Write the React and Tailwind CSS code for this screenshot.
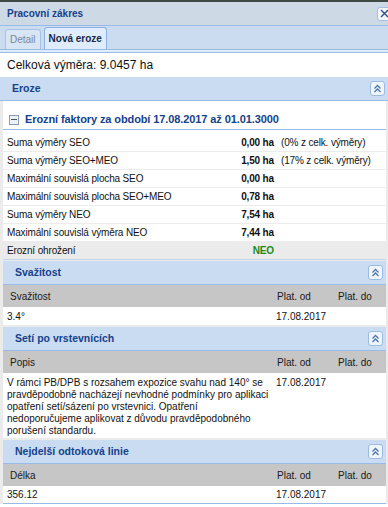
import React from 'react';

const FONT = "font-['Liberation_Sans',Arial,sans-serif]";

const CollapseBtn = () => (
  <span className="w-[15px] h-[15px] rounded-[3px] border border-[#9dbbe2] bg-[#eef5fd] flex items-center justify-center">
    <svg width="9" height="9" viewBox="0 0 9 9" fill="none" stroke="#4f74a8" strokeWidth="1.3">
      <path d="M1.5 4.5 L4.5 1.5 L7.5 4.5" />
      <path d="M1.5 8 L4.5 5 L7.5 8" />
    </svg>
  </span>
);

const PanelHeader = ({ title, button = true }) => (
  <div className="h-[24px] bg-[#cadcf1] border-b border-[#99bbe8] flex items-center justify-between pl-[12px] pr-[3px]">
    <span className="text-[10.5px] font-bold text-[#15428b]">{title}</span>
    {button && <CollapseBtn />}
  </div>
);

const rows = [
  { label: 'Suma výměry SEO', value: '0,00 ha', note: '(0% z celk. výměry)' },
  { label: 'Suma výměry SEO+MEO', value: '1,50 ha', note: '(17% z celk. výměry)' },
  { label: 'Maximální souvislá plocha SEO', value: '0,00 ha' },
  { label: 'Maximální souvislá plocha SEO+MEO', value: '0,78 ha' },
  { label: 'Suma výměry NEO', value: '7,54 ha' },
  { label: 'Maximální souvislá výměra NEO', value: '7,44 ha' },
];

const GridHeader = ({ first }) => (
  <div className="h-[22px] bg-[#c6c6c6] flex items-center text-[10px] text-[#1a1a1a]">
    <span className="w-[274px] pl-[7px]">{first}</span>
    <span className="w-[61px]">Plat. od</span>
    <span>Plat. do</span>
  </div>
);

export default function App() {
  return (
    <div className={`w-[388px] h-[507px] overflow-hidden bg-white ${FONT} text-[#111]`}>
      <div className="h-[2px] bg-[#3e4a43]" />
      <div className="h-[24px] bg-[#ced9e6] border-b border-[#99bbe8] flex items-center justify-between pl-[7px]">
        <span className="text-[10px] font-bold text-[#15428b]">Pracovní zákres</span>
        <span className="w-[14px] h-[14px] -mr-[3px] rounded-[3px] border border-[#a6bfdf] bg-[#f2f6fb] flex items-center justify-center">
          <svg width="9" height="9" viewBox="0 0 9 9" stroke="#2c4f8c" strokeWidth="1.4">
            <path d="M1 1 L8 8 M8 1 L1 8" />
          </svg>
        </span>
      </div>

      <div className="h-[23px] bg-[#cbdcf0] flex items-end pl-[5px] gap-[3px]">
        <div className="h-[20px] px-[4px] rounded-t-[3px] border border-b-0 border-[#a9c2e2] bg-[#d8e5f4] flex items-center text-[10px] text-[#7b8896]">
          Detail
        </div>
        <div className="h-[22px] px-[4px] rounded-t-[3px] border border-b-0 border-[#8db2e3] bg-[#deecfd] flex items-center text-[10px] font-bold text-[#15294a]">
          Nová eroze
        </div>
      </div>
      <div className="h-[3px] bg-[#deecfd] border-t border-[#99bbe8]" />

      <div className="h-[25px] flex items-center pl-[7px] text-[12px] text-[#111] border-t border-[#99bbe8]">
        Celková výměra: 9.0457 ha
      </div>

      <PanelHeader title="Eroze" />

      <div className="bg-[#ebebeb] pl-[3px] pr-[2px]">
        <div className="bg-white pt-[9px]">
          <div className="h-[20px] flex items-center pl-[6px] border-b border-[#99bbe8]">
            <span className="w-[10px] h-[10px] border border-[#8b9bb0] bg-[#eef1f5] flex items-center justify-center mr-[6px]">
              <span className="w-[6px] h-[1px] bg-[#4a5566]" />
            </span>
            <span className="text-[11px] font-bold tracking-[-0.1px] text-[#15428b]">
              Erozní faktory za období 17.08.2017 až 01.01.3000
            </span>
          </div>
          <div className="h-[4px]" />
          {rows.map((r) => (
            <div key={r.label} className="h-[18px] flex items-center border-b border-[#ececec] text-[10px] tracking-[-0.15px]">
              <span className="w-[222px] pl-[4px]">{r.label}</span>
              <span className="w-[49px] text-right font-bold">{r.value}</span>
              {r.note && <span className="pl-[7px]">{r.note}</span>}
            </div>
          ))}
          <div className="h-[18px] flex items-center bg-[#ebebeb] border-b border-[#c3d3e8] text-[10px] tracking-[-0.15px]">
            <span className="w-[222px] pl-[4px]">Erozní ohrožení</span>
            <span className="w-[49px] text-right font-bold text-[#1b8a1b]">NEO</span>
          </div>
        </div>

        <div className="h-[1px]" />
        <PanelHeader title="Svažitost" />
        <GridHeader first="Svažitost" />
        <div className="h-[18px] bg-white flex items-center text-[10px]">
          <span className="w-[273px] pl-[4px]">3.4°</span>
          <span>17.08.2017</span>
        </div>

        <div className="h-[2px]" />
        <PanelHeader title="Setí po vrstevnících" />
        <GridHeader first="Popis" />
        <div className="bg-white flex text-[10px] leading-[12px] pt-[4px] pb-[1px]">
          <span className="w-[273px] pl-[4px]">
            V rámci PB/DPB s rozsahem expozice svahu nad 140° se
            <br />
            pravděpodobně nacházejí nevhodné podmínky pro aplikaci
            <br />
            opatření setí/sázení po vrstevnici. Opatření
            <br />
            nedoporučujeme aplikovat z důvodu pravděpodobného
            <br />
            porušení standardu.
          </span>
          <span>17.08.2017</span>
        </div>

        <div className="h-[2px]" />
        <PanelHeader title="Nejdelší odtoková linie" />
        <GridHeader first="Délka" />
        <div className="h-[18px] bg-white flex items-center text-[10px] border-b border-[#99bbe8]">
          <span className="w-[273px] pl-[4px]">356.12</span>
          <span>17.08.2017</span>
        </div>
      </div>
    </div>
  );
}
